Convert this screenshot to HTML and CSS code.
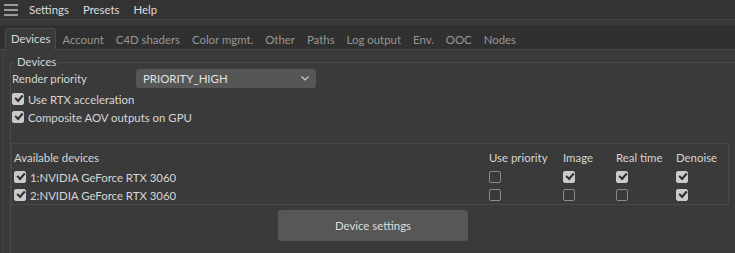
FILE: index.html
```html
<!DOCTYPE html>
<html>
<head>
<meta charset="utf-8">
<link rel="stylesheet" href="styles.css">
</head>
<body>
<div class="app">
  <div class="menubar">
    <span class="burger"><i></i><i></i><i></i></span>
    <span class="menu">Settings</span>
    <span class="menu">Presets</span>
    <span class="menu">Help</span>
  </div>
  <div class="strip"></div>
  <div class="tabbar">
    <span class="tab active">Devices</span>
    <span class="tab">Account</span>
    <span class="tab">C4D shaders</span>
    <span class="tab">Color mgmt.</span>
    <span class="tab">Other</span>
    <span class="tab">Paths</span>
    <span class="tab">Log output</span>
    <span class="tab">Env.</span>
    <span class="tab">OOC</span>
    <span class="tab">Nodes</span>
  </div>
  <div class="panel">
    <div class="group">
      <div class="legend">Devices</div>
      <div class="row">
        <span class="label">Render priority</span>
        <span class="select">PRIORITY_HIGH<svg class="chev" width="8" height="5" viewBox="0 0 8 5"><path d="M0.5 0.5 L4 4 L7.5 0.5" fill="none" stroke="#cfcfcf" stroke-width="1.1"/></svg></span>
      </div>
      <label class="check-row"><span class="cb on"></span>Use RTX acceleration</label>
      <label class="check-row"><span class="cb on"></span>Composite AOV outputs on GPU</label>
      <div class="devices">
        <div class="grid">
          <span class="hdr">Available devices</span>
          <span class="hdr">Use priority</span>
          <span class="hdr">Image</span>
          <span class="hdr">Real time</span>
          <span class="hdr">Denoise</span>

          <span class="dev"><span class="cb on"></span>1:NVIDIA GeForce RTX 3060</span>
          <span class="cell"><span class="cb"></span></span>
          <span class="cell"><span class="cb on"></span></span>
          <span class="cell"><span class="cb on"></span></span>
          <span class="cell"><span class="cb on"></span></span>

          <span class="dev"><span class="cb on"></span>2:NVIDIA GeForce RTX 3060</span>
          <span class="cell"><span class="cb"></span></span>
          <span class="cell"><span class="cb"></span></span>
          <span class="cell"><span class="cb"></span></span>
          <span class="cell"><span class="cb on"></span></span>
        </div>
      </div>
      <div class="btn-row"><button class="btn">Device settings</button></div>
    </div>
  </div>
</div>
</body>
</html>
```

FILE: styles.css
```css
html, body {
  margin: 0;
  padding: 0;
  background: #3a3a3a;
}
body {
  font-family: Lato, "Noto Sans", sans-serif;
  font-size: 11.4px;
  color: #d6d6d6;
  width: 735px;
  height: 253px;
  overflow: hidden;
}
.app {
  display: flex;
  flex-direction: column;
  height: 253px;
}
.menubar {
  height: 19px;
  background: #333333;
  display: flex;
  align-items: center;
  color: #dcdcdc;
  font-size: 11.4px;
}
.burger {
  display: flex;
  flex-direction: column;
  gap: 3px;
  width: 14px;
  margin: 0 11px 0 4px;
}
.burger i {
  display: block;
  height: 2px;
  background: #9a9a9a;
}
.menu {
  margin-right: 14px;
}
.strip {
  height: 6px;
  background: #383838;
  border-top: 1px solid #454545;
  border-bottom: 1px solid #2b2b2b;
}
.tabbar {
  height: 22px;
  background: #303030;
  display: flex;
  align-items: flex-end;
  padding-left: 5px;
  border-bottom: 1px solid #474747;
}
.tab {
  padding: 0 6px;
  height: 20px;
  line-height: 19px;
  color: #979797;
  font-size: 11.4px;
  margin-bottom: -1px;
}
.tab.active {
  background: #3a3a3a;
  color: #d8d8d8;
  border: 1px solid #4a4a4a;
  border-bottom: none;
  border-radius: 3px 3px 0 0;
  padding: 0 5px;
  height: 21px;
}
.panel {
  flex: 1;
  border-left: 1px solid #464646;
  margin-left: 3px;
  padding: 12px 0 0 6px;
  display: flex;
}
.group {
  flex: 1;
  border-left: 1px solid #4a4a4a;
  border-top: 1px solid #4a4a4a;
  position: relative;
  padding-top: 6px;
}
.legend {
  position: absolute;
  top: -9px;
  left: 4px;
  padding: 0 2px;
  background: #3a3a3a;
  line-height: 16px;
}
.row {
  display: flex;
  align-items: center;
  height: 18px;
}
.label {
  width: 124px;
  padding-left: 1px;
}
.select {
  width: 166px;
  height: 19px;
  background: #565656;
  border-radius: 3px;
  display: flex;
  align-items: center;
  padding: 0 7px;
  justify-content: space-between;
  color: #e2e2e2;
}
.check-row {
  display: flex;
  align-items: center;
  height: 18px;
  padding-left: 1px;
}
.check-row:first-of-type {
  margin-top: 3px;
}
.cb {
  width: 10px;
  height: 10px;
  border: 1px solid #8a8a8a;
  border-radius: 2px;
  box-sizing: content-box;
  display: inline-block;
  position: relative;
  margin-right: 4px;
  flex: none;
}
.cb.on {
  background: #cacaca;
  border-color: #cacaca;
}
.cb.on::after {
  content: "";
  position: absolute;
  left: 2px;
  top: 1px;
  width: 6px;
  height: 3px;
  border-left: 2px solid #2e2e2e;
  border-bottom: 2px solid #2e2e2e;
  transform: rotate(-48deg);
  transform-origin: center;
}
.devices {
  margin-top: 17px;
  margin-left: 0;
  margin-right: 6px;
  border: 1px solid #474747;
  padding: 4px 0 0 2px;
}
.grid {
  display: grid;
  grid-template-columns: 475px 74px 53px 60px auto;
  grid-template-rows: 20px 18px 18px;
  align-items: center;
}
.hdr {
  line-height: 18px;
}
.dev {
  display: flex;
  align-items: center;
}
.cell {
  display: flex;
  align-items: center;
}
.btn-row {
  display: flex;
  justify-content: center;
  padding-top: 5px;
}
.btn {
  width: 190px;
  height: 31px;
  background: #575757;
  border: none;
  border-radius: 3px;
  color: #dcdcdc;
  font-family: Lato, "Noto Sans", sans-serif;
  font-size: 11.4px;
}
```
